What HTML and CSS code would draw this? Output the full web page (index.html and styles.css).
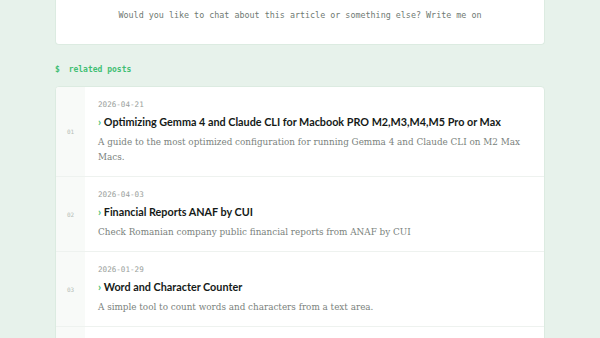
FILE: index.html
```html
<!DOCTYPE html>
<html>
<head>
<meta charset="utf-8">
<link rel="stylesheet" href="styles.css">
</head>
<body>
<div class="page">
  <div class="chat-card">
    <p class="chat-text">Would you like to chat about this article or something else? Write me on</p>
  </div>
  <h2 class="section-title"><span class="prompt">$</span> related posts</h2>
  <ul class="posts">
    <li class="post">
      <div class="num">01</div>
      <div class="body">
        <div class="date">2026-04-21</div>
        <div class="title"><span class="chev">›</span> Optimizing Gemma 4 and Claude CLI for Macbook PRO M2,M3,M4,M5 Pro or Max</div>
        <p class="desc">A guide to the most optimized configuration for running Gemma 4 and Claude CLI on M2 Max Macs.</p>
      </div>
    </li>
    <li class="post">
      <div class="num">02</div>
      <div class="body">
        <div class="date">2026-04-03</div>
        <div class="title"><span class="chev">›</span> Financial Reports ANAF by CUI</div>
        <p class="desc">Check Romanian company public financial reports from ANAF by CUI</p>
      </div>
    </li>
    <li class="post">
      <div class="num">03</div>
      <div class="body">
        <div class="date">2026-01-29</div>
        <div class="title"><span class="chev">›</span> Word and Character Counter</div>
        <p class="desc">A simple tool to count words and characters from a text area.</p>
      </div>
    </li>
    <li class="post">
      <div class="num"></div>
      <div class="body">
        <div class="date">&nbsp;</div>
        <div class="title">&nbsp;</div>
        <p class="desc">&nbsp;</p>
      </div>
    </li>
  </ul>
</div>
</body>
</html>
```
FILE: styles.css
```css
* { box-sizing: border-box; }
html, body { margin: 0; padding: 0; }
body {
  background: #e7f2eb;
  font-family: "Lato", "Liberation Sans", sans-serif;
  overflow: hidden;
  height: 338px;
}
.page {
  width: 490px;
  margin-left: 55px;
}
.chat-card {
  background: #ffffff;
  height: 45px;
  border: 1px solid #dcebe1;
  border-top: none;
  border-radius: 0 0 4px 4px;
  padding-top: 9px;
}
.chat-text {
  margin: 0;
  text-align: center;
  font-family: "DejaVu Sans Mono", monospace;
  font-size: 8.4px;
  line-height: 12px;
  color: #6f7a73;
}
.section-title {
  margin: 19px 0 0 0;
  height: 22px;
  font-family: "DejaVu Sans Mono", monospace;
  font-size: 8px;
  line-height: 12px;
  font-weight: bold;
  color: #3fbf73;
}
.prompt { margin-right: 4px; }
.posts {
  list-style: none;
  margin: 0;
  padding: 0;
  background: #ffffff;
  border: 1px solid #dcebe1;
  border-radius: 4px;
  overflow: hidden;
}
.post {
  display: flex;
  border-bottom: 1px solid #eef2ef;
}
.num {
  width: 29px;
  flex: none;
  background: #f8faf8;
  display: flex;
  align-items: center;
  justify-content: center;
  font-family: "DejaVu Sans Mono", monospace;
  font-size: 6px;
  color: #b5bdb7;
}
.body {
  padding: 12px 12px 12px 13px;
  flex: 1;
}
.date {
  font-family: "DejaVu Sans Mono", monospace;
  font-size: 7.6px;
  line-height: 12px;
  color: #9aa19c;
}
.title {
  margin-top: 3px;
  font-weight: 700;
  font-size: 10.8px;
  line-height: 16px;
  color: #151a17;
}
.chev {
  color: #3fbf73;
  font-weight: 700;
}
.desc {
  margin: 4px 0 0 0;
  font-family: "DejaVu Serif", serif;
  font-stretch: condensed;
  font-size: 9.8px;
  line-height: 15px;
  color: #7a827d;
}
```
